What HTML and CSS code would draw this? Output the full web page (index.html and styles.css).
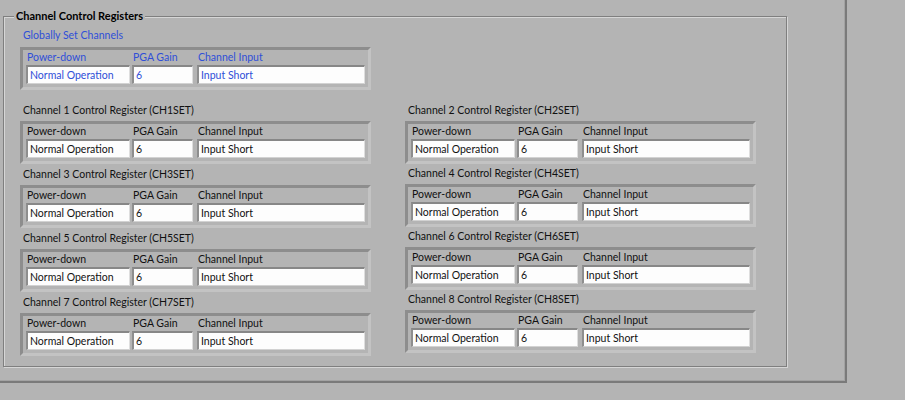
FILE: index.html
```html
<!DOCTYPE html>
<html lang="en">
	<head>
		<meta charset="UTF-8">
		<title>Channel Control Registers</title>
		<link rel="stylesheet" href="styles.css">
	</head>
	<body>
		<div class="panel">
			<div class="group">
				<div class="group-title">Channel Control Registers</div>
				<div class="group-body">
					<div class="reg reg-global">
						<div class="reg-title">Globally Set Channels</div>
						<div class="reg-box">
							<div class="cell cell-pd"><span class="cell-label">Power-down</span><span class="cell-value">Normal Operation</span></div>
							<div class="cell cell-gain"><span class="cell-label">PGA Gain</span><span class="cell-value">6</span></div>
							<div class="cell cell-input"><span class="cell-label">Channel Input</span><span class="cell-value">Input Short</span></div>
						</div>
					</div>

					<div class="columns">
						<div class="column column-left">
							<div class="reg">
								<div class="reg-title">Channel 1 Control Register (CH1SET)</div>
								<div class="reg-box">
									<div class="cell cell-pd"><span class="cell-label">Power-down</span><span class="cell-value">Normal Operation</span></div>
									<div class="cell cell-gain"><span class="cell-label">PGA Gain</span><span class="cell-value">6</span></div>
									<div class="cell cell-input"><span class="cell-label">Channel Input</span><span class="cell-value">Input Short</span></div>
								</div>
							</div>
							<div class="reg">
								<div class="reg-title">Channel 3 Control Register (CH3SET)</div>
								<div class="reg-box">
									<div class="cell cell-pd"><span class="cell-label">Power-down</span><span class="cell-value">Normal Operation</span></div>
									<div class="cell cell-gain"><span class="cell-label">PGA Gain</span><span class="cell-value">6</span></div>
									<div class="cell cell-input"><span class="cell-label">Channel Input</span><span class="cell-value">Input Short</span></div>
								</div>
							</div>
							<div class="reg">
								<div class="reg-title">Channel 5 Control Register (CH5SET)</div>
								<div class="reg-box">
									<div class="cell cell-pd"><span class="cell-label">Power-down</span><span class="cell-value">Normal Operation</span></div>
									<div class="cell cell-gain"><span class="cell-label">PGA Gain</span><span class="cell-value">6</span></div>
									<div class="cell cell-input"><span class="cell-label">Channel Input</span><span class="cell-value">Input Short</span></div>
								</div>
							</div>
							<div class="reg">
								<div class="reg-title">Channel 7 Control Register (CH7SET)</div>
								<div class="reg-box">
									<div class="cell cell-pd"><span class="cell-label">Power-down</span><span class="cell-value">Normal Operation</span></div>
									<div class="cell cell-gain"><span class="cell-label">PGA Gain</span><span class="cell-value">6</span></div>
									<div class="cell cell-input"><span class="cell-label">Channel Input</span><span class="cell-value">Input Short</span></div>
								</div>
							</div>
						</div>

						<div class="column column-right">
							<div class="reg">
								<div class="reg-title">Channel 2 Control Register (CH2SET)</div>
								<div class="reg-box">
									<div class="cell cell-pd"><span class="cell-label">Power-down</span><span class="cell-value">Normal Operation</span></div>
									<div class="cell cell-gain"><span class="cell-label">PGA Gain</span><span class="cell-value">6</span></div>
									<div class="cell cell-input"><span class="cell-label">Channel Input</span><span class="cell-value">Input Short</span></div>
								</div>
							</div>
							<div class="reg">
								<div class="reg-title">Channel 4 Control Register (CH4SET)</div>
								<div class="reg-box">
									<div class="cell cell-pd"><span class="cell-label">Power-down</span><span class="cell-value">Normal Operation</span></div>
									<div class="cell cell-gain"><span class="cell-label">PGA Gain</span><span class="cell-value">6</span></div>
									<div class="cell cell-input"><span class="cell-label">Channel Input</span><span class="cell-value">Input Short</span></div>
								</div>
							</div>
							<div class="reg">
								<div class="reg-title">Channel 6 Control Register (CH6SET)</div>
								<div class="reg-box">
									<div class="cell cell-pd"><span class="cell-label">Power-down</span><span class="cell-value">Normal Operation</span></div>
									<div class="cell cell-gain"><span class="cell-label">PGA Gain</span><span class="cell-value">6</span></div>
									<div class="cell cell-input"><span class="cell-label">Channel Input</span><span class="cell-value">Input Short</span></div>
								</div>
							</div>
							<div class="reg">
								<div class="reg-title">Channel 8 Control Register (CH8SET)</div>
								<div class="reg-box">
									<div class="cell cell-pd"><span class="cell-label">Power-down</span><span class="cell-value">Normal Operation</span></div>
									<div class="cell cell-gain"><span class="cell-label">PGA Gain</span><span class="cell-value">6</span></div>
									<div class="cell cell-input"><span class="cell-label">Channel Input</span><span class="cell-value">Input Short</span></div>
								</div>
							</div>
						</div>
					</div>
				</div>
			</div>
		</div>
	</body>
</html>
```

FILE: styles.css
```css
:root {
    --panel-bg: #b4b4b4;
    --frame-dark: #7a7a7a;
    --etch-dark: #7f7f7f;
    --etch-light: #d6d6d6;
    --box-dark: #8d8d8d;
    --box-light: #c3c3c3;
    --label-blue: #2f4fd8;
}

* {
    box-sizing: border-box;
    margin: 0;
    padding: 0;
}

body {
    font-family: Lato, "Liberation Sans", sans-serif;
    font-size: 10.5px;
    color: #111;
    background: var(--panel-bg);
    overflow: hidden;
}

/* outer pane with its splitter edges */
.panel {
    width: 847px;
    height: 383px;
    padding: 16px 0 0 3px;
    border-right: 2px solid var(--frame-dark);
    border-bottom: 2px solid var(--frame-dark);
    box-shadow: inset -1px -1px 0 #a3a3a3;
}

/* etched group frame */
.group {
    width: 784px;
    border: 1px solid var(--etch-dark);
    box-shadow: inset 1px 1px 0 var(--etch-light), 1px 1px 0 var(--etch-light);
}

.group-title {
    width: fit-content;
    margin: -8px 0 0 10px;
    padding: 0 2px;
    line-height: 14px;
    font-size: 11px;
    font-weight: 700;
    color: #000;
    background: var(--panel-bg);
}

.group-body {
    padding: 5px 0 10px 16px;
}

/* register clusters */
.reg-title {
    padding-left: 3px;
    line-height: 14px;
    margin-bottom: 4px;
}

.reg-global .reg-title {
    margin-bottom: 5px;
    color: var(--label-blue);
}

.reg-box {
    display: flex;
    width: 351px;
    height: 43px;
    padding: 0 3px 3px;
    border-style: solid;
    border-width: 3px;
    border-color: var(--box-dark) var(--box-light) var(--box-light) var(--box-dark);
}

.cell {
    display: flex;
    flex-direction: column;
}

.cell-pd { width: 104px; margin-right: 2px; }
.cell-gain { width: 61px; margin-right: 4px; }
.cell-input { flex: 1; }

.cell-label {
    height: 15px;
    line-height: 15px;
    padding-left: 1px;
    white-space: nowrap;
}

.cell-value {
    height: 19px;
    line-height: 16px;
    padding-left: 2px;
    background: #fdfdfd;
    border-top: 2px solid #878787;
    border-left: 2px solid #8e8e8e;
    border-right: 1px solid #dedede;
    border-bottom: 1px solid #d2d2d2;
    white-space: nowrap;
    overflow: hidden;
}

.reg-global .cell-label,
.reg-global .cell-value {
    color: var(--label-blue);
}

.columns {
    display: flex;
    gap: 34px;
    margin-top: 13px;
}

.column {
    display: flex;
    flex-direction: column;
    gap: 3px;
}

.column-right {
    gap: 2px;
}
```
